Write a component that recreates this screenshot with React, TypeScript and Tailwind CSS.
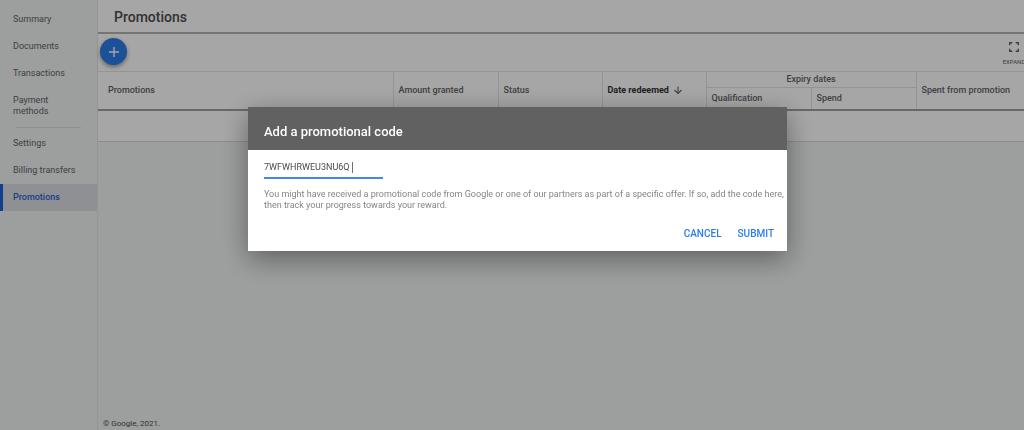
import { useState } from 'react';

const topLinks = ['Summary', 'Documents', 'Transactions', 'Payment methods'];
const bottomLinks = ['Settings', 'Billing transfers', 'Promotions'];

const NavLink = ({ label, active }: { label: string; active?: boolean }) => (
  <a
    href="#"
    aria-current={active ? 'page' : undefined}
    className={
      active
        ? 'block border-l-[3px] border-[#1a62d6] bg-[#dcdee3] py-2 pl-[10px] font-medium text-[#2a62c9]'
        : 'block py-2 pl-[13px] pr-5 text-[#5f6368]'
    }
  >
    {label}
  </a>
);

const Sidebar = () => (
  <nav className="w-[98px] shrink-0 border-r border-[#e4e6e7] bg-[#f1f3f3] pt-[6px] text-[9px] leading-[11px]">
    {topLinks.map((label) => (
      <NavLink key={label} label={label} />
    ))}
    <hr className="mx-4 my-[2px] border-[#dadcdd]" />
    {bottomLinks.map((label) => (
      <NavLink key={label} label={label} active={label === 'Promotions'} />
    ))}
  </nav>
);

const PromotionsTable = () => (
  <table className="w-full table-fixed border-collapse bg-white text-left text-[9px] leading-[11px] text-[#5f6368]">
    <colgroup>
      <col />
      <col className="w-[105px]" />
      <col className="w-[104px]" />
      <col className="w-[104px]" />
      <col className="w-[105px]" />
      <col className="w-[105px]" />
      <col className="w-[108px]" />
    </colgroup>
    <thead className="border-t border-b-2 border-t-[#e4e4e4] border-b-[#a0a0a0]">
      <tr className="h-4">
        <th rowSpan={2} className="pl-[10px] font-medium">Promotions</th>
        <th rowSpan={2} className="border-l border-[#e4e4e4] pl-[5px] font-medium">Amount granted</th>
        <th rowSpan={2} className="border-l border-[#e4e4e4] pl-[5px] font-medium">Status</th>
        <th rowSpan={2} className="border-l border-[#e4e4e4] pl-[5px] font-bold text-[#303134]" aria-sort="descending">
          <span className="flex items-center gap-1">
            Date redeemed
            <svg viewBox="0 0 10 10" className="size-[10px]" fill="none" stroke="#5f6368" strokeWidth="1.1">
              <path d="M5 1.5v7M1.5 5 5 8.5 8.5 5" />
            </svg>
          </span>
        </th>
        <th colSpan={2} className="border-b border-l border-[#e4e4e4] text-center font-medium">Expiry dates</th>
        <th rowSpan={2} className="border-l border-[#e4e4e4] pl-[5px] font-medium">Spent from promotion</th>
      </tr>
      <tr className="h-[22px]">
        <th className="border-l border-[#e4e4e4] pl-[5px] font-medium">Qualification</th>
        <th className="border-l border-[#e4e4e4] pl-[5px] font-medium">Spend</th>
      </tr>
    </thead>
    <tbody>
      <tr className="h-8 border-b border-[#d8dada]">
        <td colSpan={7}></td>
      </tr>
    </tbody>
  </table>
);

const PromoCodeDialog = () => {
  const [code, setCode] = useState('7WFWHRWEU3NU6Q');

  return (
    <div className="fixed inset-0 flex items-start justify-center bg-black/35 pt-[107px] pl-[11px]">
      <form
        role="dialog"
        aria-labelledby="dialog-title"
        onSubmit={(e) => e.preventDefault()}
        className="w-full max-w-[539px] bg-white shadow-[0_8px_26px_rgba(0,0,0,0.4)]"
      >
        <h2 id="dialog-title" className="bg-[#616161] px-4 pt-[17px] pb-[10px] text-[13px] leading-4 font-medium text-white">
          Add a promotional code
        </h2>
        <div className="pt-[9px] pl-4">
          <div className="relative w-[119px]">
            <input
              type="text"
              aria-label="Promotional code"
              value={code}
              onChange={(e) => setCode(e.target.value)}
              className="block h-5 w-full border-b-2 border-[#4285f4] pb-[2px] text-[9px] text-[#4a4a4a] outline-none"
            />
            <span className="absolute top-[3px] left-[88px] h-[11px] w-px bg-[#707070]" />
          </div>
          <p className="mt-[10px] text-[9px] leading-[11px] text-[#858585]">
            You might have received a promotional code from Google or one of our partners as part of a specific offer. If
            so, add the code here, then track your progress towards your reward.
          </p>
        </div>
        <div className="flex justify-end gap-4 pt-[17px] pr-[13px] pb-[11px] text-[10px] leading-3 font-medium text-[#2b7de9]">
          <button type="button">CANCEL</button>
          <button type="submit">SUBMIT</button>
        </div>
      </form>
    </div>
  );
};

const App = () => (
  <div className="flex min-h-screen overflow-hidden bg-[#f1f3f3] font-[Roboto,sans-serif]">
    <Sidebar />
    <main className="flex min-w-0 flex-1 flex-col">
      <header className="border-b-2 border-[#b4b4b4] bg-white px-4 pt-[9px] pb-[7px]">
        <h1 className="text-[14px] leading-4 font-medium text-[#4a4d51]">Promotions</h1>
      </header>
      <div className="flex h-[37px] items-start justify-between bg-white pt-1 pl-[2px]">
        <button
          type="button"
          aria-label="Add promotion"
          className="flex size-[27px] items-center justify-center rounded-full bg-[#2b7de9] shadow-[0_2px_4px_rgba(0,0,0,0.4)]"
        >
          <svg viewBox="0 0 12 12" className="size-3" stroke="#fff" strokeWidth="1.4">
            <path d="M6 1v10M1 6h10" />
          </svg>
        </button>
        <button type="button" className="flex w-5 flex-col items-center gap-[6px] pt-1 text-[6px] leading-[8px] text-[#5f6368]">
          <svg viewBox="0 0 10 10" className="size-[10px] shrink-0" fill="none" stroke="currentColor" strokeWidth="1.4">
            <path d="M.7 3.3V.7h2.6M6.7.7h2.6v2.6M9.3 6.7v2.6H6.7M3.3 9.3H.7V6.7" />
          </svg>
          <span>EXPAND</span>
        </button>
      </div>
      <PromotionsTable />
      <footer className="mt-auto pb-px pl-[5px] text-[8px] leading-[11px] text-[#4a4d51]">© Google, 2021.</footer>
    </main>
    <PromoCodeDialog />
  </div>
);

export default App;
